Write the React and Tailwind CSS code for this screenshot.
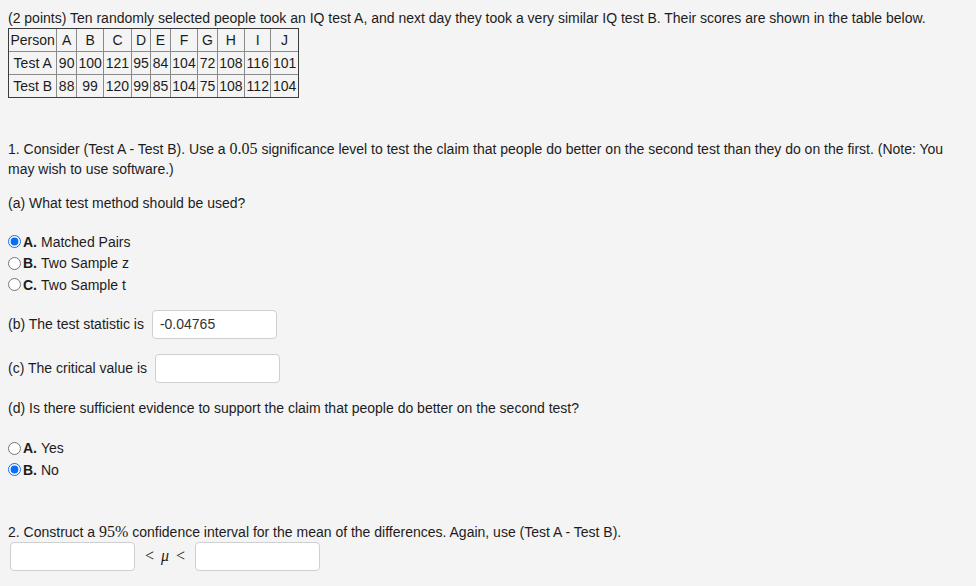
import React from 'react'

const people = ['A', 'B', 'C', 'D', 'E', 'F', 'G', 'H', 'I', 'J']
const testA = [90, 100, 121, 95, 84, 104, 72, 108, 116, 101]
const testB = [88, 99, 120, 99, 85, 104, 75, 108, 112, 104]

function Cell({ children, lastCol, lastRow }) {
	return (
		<td
			className={
				'px-[1.5px] h-[22px] text-center leading-[22px] border-[#8a8a8a] ' +
				(lastCol ? '' : 'border-r ') +
				(lastRow ? '' : 'border-b')
			}
		>
			{children}
		</td>
	)
}

function Radio({ letter, label, checked, name }) {
	return (
		<label className="flex items-center h-[21.5px]">
			<input
				type="radio"
				name={name}
				defaultChecked={checked}
				className="m-0 mr-[2px] w-[13px] h-[13px] accent-[#0b6cf4]"
			/>
			<span className="font-bold">{letter}</span>
			<span className="ml-[4px]">{label}</span>
		</label>
	)
}

function Box({ value }) {
	return (
		<input
			type="text"
			defaultValue={value}
			className="w-[125px] h-[29px] bg-white border border-[#cfcfcf] rounded-[4px] px-[7px] text-[14px] text-[#333] outline-none"
		/>
	)
}

const mathFont = "font-['Liberation_Serif','Times_New_Roman',serif] text-[16px] leading-none"

export default function App() {
	return (
		<div className="min-h-screen bg-[#f4f4f4] pl-2 pt-2 text-[14px] leading-5 text-[#1c1c1c] font-['Liberation_Sans',Arial,sans-serif]">
			<p>
				(2 points) Ten randomly selected people took an IQ test A, and next day they took a very similar IQ test B. Their scores are shown in the table below.
			</p>
			<table className="border-separate border-spacing-0 border border-[#3c3c3c]">
				<tbody>
					<tr>
						<Cell>Person</Cell>
						{people.map((p, i) => (
							<Cell key={p} lastCol={i === people.length - 1}>{p}</Cell>
						))}
					</tr>
					<tr>
						<Cell>Test A</Cell>
						{testA.map((v, i) => (
							<Cell key={i} lastCol={i === testA.length - 1}>{v}</Cell>
						))}
					</tr>
					<tr>
						<Cell lastRow>Test B</Cell>
						{testB.map((v, i) => (
							<Cell key={i} lastRow lastCol={i === testB.length - 1}>{v}</Cell>
						))}
					</tr>
				</tbody>
			</table>

			{/* Part 1 */}
			<p className="mt-[41px] pr-2">
				1. Consider (Test A - Test B). Use a <span className={mathFont}>0.05</span> significance level to test the claim that people do better on the second test than they do on the first. (Note: You may wish to use software.)
			</p>
			<p className="mt-[14px]">(a) What test method should be used?</p>
			<div className="mt-[18px] flex flex-col">
				<Radio name="method" letter="A." label="Matched Pairs" checked />
				<Radio name="method" letter="B." label="Two Sample z" />
				<Radio name="method" letter="C." label="Two Sample t" />
			</div>

			<div className="mt-[14px] flex items-center gap-[8px]">
				<span>(b) The test statistic is</span>
				<Box value="-0.04765" />
			</div>
			<div className="mt-[15px] flex items-center gap-[8px]">
				<span>(c) The critical value is</span>
				<Box value="" />
			</div>

			<p className="mt-[15px]">(d) Is there sufficient evidence to support the claim that people do better on the second test?</p>
			<div className="mt-5 flex flex-col">
				<Radio name="evidence" letter="A." label="Yes" />
				<Radio name="evidence" letter="B." label="No" checked />
			</div>

			{/* Part 2 */}
			<p className="mt-[41px]">
				2. Construct a <span className={mathFont}>95%</span> confidence interval for the mean of the differences. Again, use (Test A - Test B).
			</p>
			<div className="flex items-center pl-[2px]">
				<Box value="" />
				<span className={'mx-[10px] flex items-center gap-[7px] ' + mathFont}>
					<span>&lt;</span>
					<span className="italic">μ</span>
					<span>&lt;</span>
				</span>
				<Box value="" />
			</div>
		</div>
	)
}
